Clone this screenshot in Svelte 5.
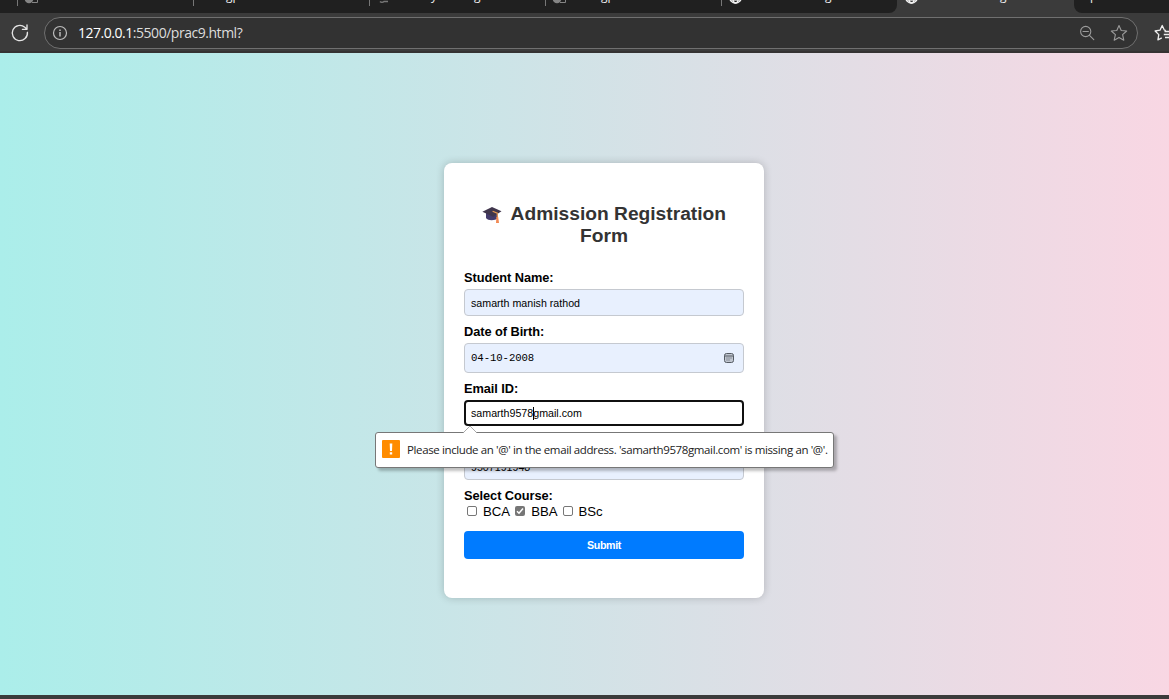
<script>
  const tabs = [
    { icon: 'link', parts: [{ t: 'y', gap: 40 }, { t: 'g', gap: 37 }] },
    { icon: 'panel', parts: [{ t: 'gp', gap: 34 }] },
    { icon: 'globe', parts: [{ t: 'g', gap: 82 }] }
  ];
  const courses = [
    { name: 'BCA', on: false },
    { name: 'BBA', on: true },
    { name: 'BSc', on: false }
  ];
</script>

{#snippet favicon(kind)}
  <svg class="fav" width="16" height="14" viewBox="0 0 16 14">
    {#if kind === 'globe'}
      <g fill="none" stroke="#f2f2f2" stroke-width="1.3"><circle cx="8.5" cy="7" r="6" /><ellipse cx="8.5" cy="7" rx="2.8" ry="6" /><path d="M3 10h11" /></g>
    {:else if kind === 'link'}
      <path d="M5 11.5c1 1 3 1 4 0h4" fill="none" stroke="#777" stroke-width="1.5" />
    {:else}
      <circle cx="6" cy="9" r="4.3" fill="#858585" /><path d="M9 12.5h5.5V8" fill="none" stroke="#858585" />
    {/if}
  </svg>
{/snippet}

<div class="window">
  <div class="tabs">
    <div class="tab first">{@render favicon('panel')}</div>
    <div class="tab">
      <span class="frag" style="margin-left:33px">gp</span>
    </div>
    {#each tabs as tab}
      <div class="tab">
        {@render favicon(tab.icon)}
        {#each tab.parts as p}<span class="frag" style="margin-left:{p.gap}px">{p.t}</span>{/each}
      </div>
    {/each}
    <div class="tab active">
      {@render favicon('globe')}<span class="frag" style="margin-left:81px">g</span>
    </div>
    <div class="rest"><span class="frag">p</span></div>
  </div>

  <div class="toolbar">
    <svg class="reload" width="20" height="20" viewBox="0 0 20 20" fill="none" stroke="#e4e4e4" stroke-width="1.35" stroke-linecap="round" stroke-linejoin="round"><path d="M17.4 9.3A7.6 7.6 0 1 1 14.8 4.3L17 6.2M17 2v4.3h-4.6" /></svg>
    <div class="address">
      <svg width="16" height="16" viewBox="0 0 16 16" fill="none" stroke="#bcbcbc" stroke-width="1.2"><circle cx="8" cy="8" r="6.5" /><path d="M8 7v4.4M8 4.5v1.4" stroke-width="1.5" /></svg>
      <span class="url"><b>127.0.0.1</b>:5500/prac9.html?</span>
      <svg class="zoom" width="16" height="16" viewBox="0 0 16 16" fill="none" stroke="#9b9b9b" stroke-width="1.1" stroke-linecap="round"><circle cx="6.7" cy="6.5" r="5.1" /><path d="M4 6.5h5.4M10.5 10.3l4.3 4.3" /></svg>
      <svg class="star" width="18" height="18" viewBox="0 0 18 18" fill="none" stroke="#9b9b9b" stroke-width="1.1" stroke-linejoin="round"><path d="M9 1.5l2.2 5 5.5.5-4.1 3.7 1.2 5.5L9 13.4l-4.8 2.8 1.2-5.5L1.3 7l5.5-.5z" /></svg>
    </div>
    <svg class="favs" width="16" height="18" viewBox="0 0 16 18" fill="none" stroke="#eee" stroke-width="1.3" stroke-linejoin="round"><path d="M12 6.3l-1.7-.2L8.2 1.5 6 6.2 1.1 7l3.7 3.6-.9 5.2 3.9-2M10.5 7.5H16M9.8 10.5H16M11 13.5H16" /></svg>
  </div>

  <main>
    <form class="card" novalidate onsubmit={(e) => e.preventDefault()}>
      <h2>
        <svg width="20" height="20" viewBox="0 0 20 20">
          <path d="M4 9v5c2 3 9 3 12 0V9z" fill="#433b6b" />
          <path d="M.4 7.8L10 3.1l9.5 4.2-8.4 5.4z" fill="#40364c" />
          <path d="M10.6 7.3l4.7 1.8v5" fill="none" stroke="#e89a50" stroke-width="1.2" />
          <path d="M14.4 13h1.8l.8 6h-3z" fill="#f28a54" />
        </svg>
        Admission Registration<br />Form
      </h2>
      <label for="name">Student Name:</label>
      <div class="field" id="name">samarth manish rathod</div>
      <label for="dob">Date of Birth:</label>
      <div class="field date" id="dob">
        <span>04-10-2008</span>
        <svg width="10" height="10" viewBox="0 0 10 10"><rect x=".5" y=".5" width="9" height="9" rx="2" fill="#c0c6d0" stroke="#555b63" /><path d="M.5 3h9" stroke="#555b63" /><path d="M2.5 5h1M4.5 5h1M6.5 5h1M2.5 7h1M4.5 7h1" stroke="#555b63" /></svg>
      </div>
      <label for="mail">Email ID:</label>
      <div class="field focus" id="mail">samarth9578<i class="caret"></i>gmail.com</div>
      <div class="field" id="phone">9507191948</div>
      <label class="pick" for="course">Select Course:</label>
      <div class="courses" id="course">
        {#each courses as c}
          <span class="box" class:on={c.on}>
            {#if c.on}<svg width="10" height="10" viewBox="0 0 10 10"><path d="M2 5.2l2 2 4-4.7" fill="none" stroke="#fff" stroke-width="1.5" /></svg>{/if}
          </span>
          <span class="course">{c.name}</span>
        {/each}
      </div>
      <button>Submit</button>

      <div class="bubble">
        <svg class="arrow" width="14" height="8" viewBox="0 0 14 8"><path d="M.5 7.5L7 1l6.5 6.5" fill="#fff" stroke="#aaa" /><path d="M1 7.5h12" stroke="#fff" /></svg>
        <span class="warn"><svg width="18" height="18" viewBox="0 0 18 18"><path d="M7.7 3.5h2.6L10 11H8zM7.8 12.3h2.4v2.3H7.8z" fill="#fff" /></svg></span>
        <span class="msg">Please include an '@' in the email address. 'samarth9578gmail.com' is missing an '@'.</span>
      </div>
    </form>
  </main>
  <footer></footer>
</div>

<style>
  :global(body) { overflow: hidden; }
  .window { width: 1169px; height: 699px; overflow: hidden; display: flex; flex-direction: column; background: #3b3b3b; }
  .tabs { height: 13px; flex: none; display: flex; background: #3b3b3b; overflow: hidden; }
  .tab { width: 176px; height: 13px; flex: none; box-sizing: border-box; background: linear-gradient(#777, #777) 0 0 / 1px 6px no-repeat #202020; display: flex; align-items: flex-start; overflow: hidden; }
  .tab.first { width: 193px; padding-left: 17px; background-position: 17px 0; }
  .tab:nth-child(5) { border-radius: 0 0 8px 0; }
  .tab.active { width: 177px; background: #3b3b3b; }
  .rest { flex: 1; background: #202020; border-radius: 0 0 0 8px; padding-left: 16px; display: flex; }
  .fav { flex: none; margin: -10px 0 0 6px; }
  .frag { font: 12px/16px "Open Sans", sans-serif; color: #eee; margin-top: -12px; height: 16px; }
  .toolbar { height: 40px; flex: none; display: flex; align-items: center; box-shadow: inset 0 -2px #353333; }
  .reload { flex: none; margin-left: 10px; }
  .address { box-sizing: border-box; width: 1094px; height: 32px; margin-left: 14px; border: 1px solid #707070; border-radius: 16px; background: #323232; display: flex; align-items: center; padding: 0 9px 0 7px; flex: none; }
  .url { margin-left: 10px; font: 14px/20px "Open Sans", sans-serif; color: #ddd; letter-spacing: -0.47px; flex: 1; }
  .url b { font-weight: 400; color: #fff; }
  .zoom { margin-right: 15px; }
  .favs { margin-left: 16px; flex: none; }
  main { flex: 1; min-height: 0; padding: 110px 0 0 444px; background: linear-gradient(to right, #abeeea 0, #fbd6e3 1208px); }
  footer { height: 4px; flex: none; background: #3b3b3b; }
  .card { position: relative; box-sizing: border-box; width: 320px; height: 435px; padding: 40px 20px 0; background: #fff; border-radius: 8px; box-shadow: 0 0 8px rgba(0, 0, 0, .2); font-family: "Liberation Sans", Arial, sans-serif; display: flex; flex-direction: column; }
  h2 { margin: 0 0 23px; font-size: 19.2px; line-height: 22px; text-align: center; color: #333; }
  h2 svg { vertical-align: -4px; margin-right: 4px; }
  label { font-weight: 700; font-size: 12.8px; line-height: 15px; height: 15px; margin-bottom: 4px; color: #000; letter-spacing: -0.06px; }
  .field { box-sizing: border-box; height: 27px; flex: none; padding: 0 6px; border: 1px solid #c5c9d0; border-radius: 4px; background: #e8f0fe; font-size: 10.67px; line-height: 26px; margin-bottom: 8px; color: #000; }
  .date { height: 30px; display: flex; align-items: center; justify-content: space-between; padding-right: 9px; font-family: "Liberation Mono", monospace; letter-spacing: -0.08px; }
  #phone { height: 27px; margin-top: 19px; }
  .focus { height: 26px; border: 2px solid #101010; background: #fff; padding: 0 5px; line-height: 23px; }
  .caret { display: inline-block; width: 1px; height: 13px; margin-right: -1px; background: #000; vertical-align: -3px; }
  .pick { margin-bottom: 0; }
  .courses { height: 16px; margin-bottom: 12px; display: flex; align-items: center; font-size: 13.2px; }
  .box { box-sizing: border-box; width: 10px; height: 10px; border: 1px solid #777; border-radius: 2px; margin: 0 6px 0 3px; display: flex; flex: none; }
  .box.on { background: #767676; border: 0; }
  .course { margin-right: 2px; }
  button { height: 28px; padding: 0; border: 0; border-radius: 4px; background: #007bff; color: #fff; font: 700 10.67px "Liberation Sans", Arial, sans-serif; letter-spacing: -0.35px; }
  .bubble { position: absolute; left: -69px; top: 269px; box-sizing: border-box; width: 459px; height: 36px; display: flex; align-items: center; padding: 0 0 2px 6px; background: #fff; border: 1px solid #777; border-radius: 3px; box-shadow: 3px 3px 3px rgba(0, 0, 0, .25); }
  .arrow { position: absolute; left: 87px; top: -8px; }
  .warn { width: 18px; height: 18px; border-radius: 1px; background: #ff8c00; display: flex; }
  .msg { margin: 1px 0 0 7px; font: 11.5px/16px "Open Sans", sans-serif; letter-spacing: -0.38px; white-space: nowrap; color: #222; }
</style>
